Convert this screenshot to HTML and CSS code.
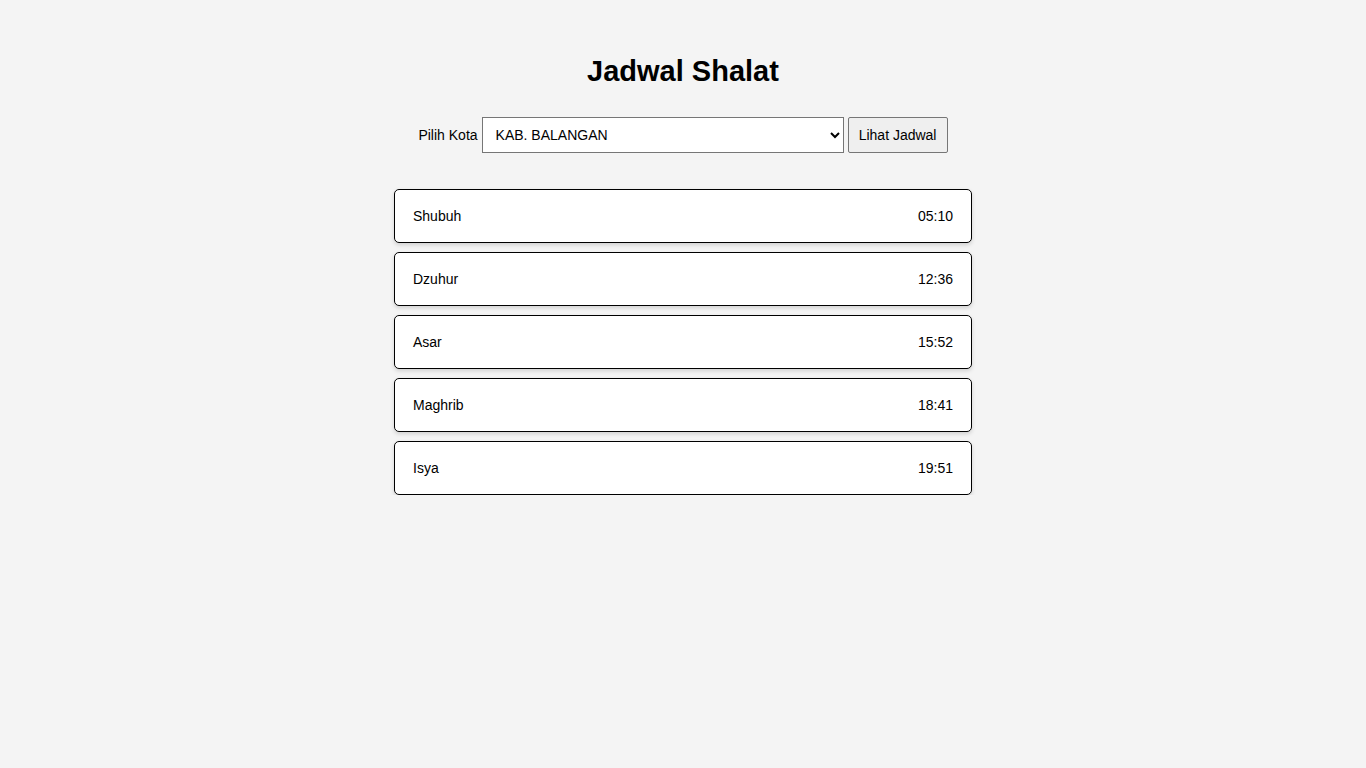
FILE: index.html
```html
<!DOCTYPE html>
<html lang="id">
<head>
<meta charset="utf-8">
<title>Jadwal Shalat</title>
<link rel="stylesheet" href="styles.css">
</head>
<body>
<main class="container">
  <h1 class="title">Jadwal Shalat</h1>
  <form class="picker">
    <label class="picker-label" for="kota">Pilih Kota</label>
    <select id="kota" class="picker-select">
      <option>KAB. BALANGAN</option>
    </select>
    <button type="button" class="picker-btn">Lihat Jadwal</button>
  </form>
  <ul class="schedule">
    <li class="item"><span>Shubuh</span><span>05:10</span></li>
    <li class="item"><span>Dzuhur</span><span>12:36</span></li>
    <li class="item"><span>Asar</span><span>15:52</span></li>
    <li class="item"><span>Maghrib</span><span>18:41</span></li>
    <li class="item"><span>Isya</span><span>19:51</span></li>
  </ul>
</main>
</body>
</html>
```

FILE: styles.css
```css
html, body {
  margin: 0;
  padding: 0;
  background: #f4f4f4;
  font-family: "Liberation Sans", Arial, sans-serif;
  color: #000;
}

.container {
  width: 578px;
  margin: 0 auto;
  padding-top: 54px;
}

.title {
  margin: 0;
  text-align: center;
  font-size: 29px;
  line-height: 34px;
  font-weight: bold;
}

.picker {
  margin-top: 29px;
  display: flex;
  justify-content: center;
  align-items: center;
  font-size: 14px;
}

.picker-label {
  margin-right: 4px;
}

.picker-select {
  width: 362px;
  height: 36px;
  padding: 0 9px;
  font-family: "Liberation Sans", Arial, sans-serif;
  font-size: 14px;
  color: #000;
  background: #fff;
  border: 1px solid #767676;
  border-radius: 0;
}

.picker-btn {
  margin-left: 4px;
  width: 100px;
  height: 36px;
  font-family: "Liberation Sans", Arial, sans-serif;
  font-size: 14px;
  color: #000;
  background: #efefef;
  border: 1px solid #767676;
  border-radius: 2px;
  padding: 0;
}

.schedule {
  list-style: none;
  margin: 36px 0 0;
  padding: 0;
  display: flex;
  flex-direction: column;
  gap: 9px;
}

.item {
  height: 54px;
  box-sizing: border-box;
  display: flex;
  justify-content: space-between;
  align-items: center;
  padding: 0 18px;
  background: #fff;
  border: 1px solid #000;
  border-radius: 5px;
  box-shadow: 0 2px 4px rgba(0, 0, 0, 0.15);
  font-size: 14px;
}
```
